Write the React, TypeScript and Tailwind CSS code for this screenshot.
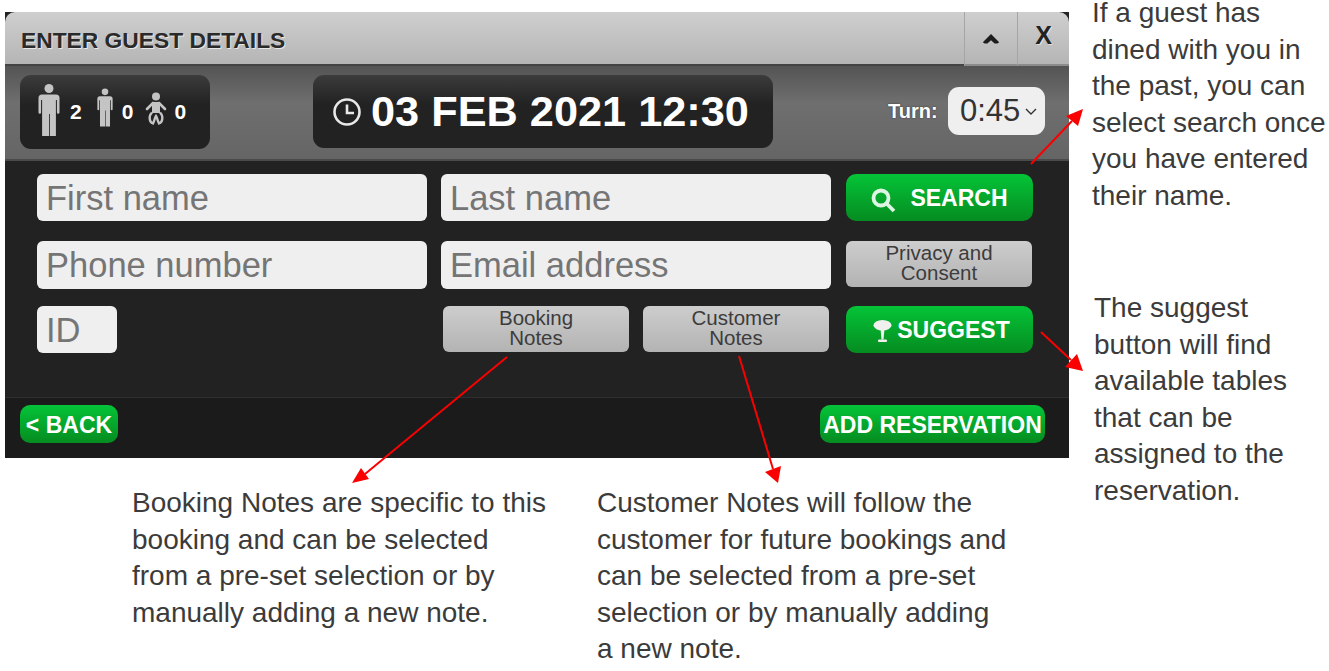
import React from "react";

const sans = "font-['Liberation_Sans',Arial,sans-serif]";

const Person = ({ className }: { className: string }) => (
  <svg viewBox="0 0 22 52" className={className} fill="#c4c4c4">
    <circle cx="11" cy="4.500" r="4.500" />
    <path d="M4 10.500h14a3.500 3.500 0 0 1 3.500 3.500v14.500a1.300 1.300 0 0 1-2.600 0V16h-1v36h-6V30h-.8v22H4.100V16h-1v12.500a1.300 1.300 0 0 1-2.600 0V14A3.500 3.500 0 0 1 4 10.500z" />
  </svg>
);

const Baby = () => (
  <svg viewBox="0 0 22 33" className="w-[22px] h-[33px] ml-[12px] mb-[7px]" fill="none">
    <circle cx="11" cy="4.500" r="4" fill="#c4c4c4" />
    <path d="M7 10h8v11H7z" fill="#c4c4c4" />
    <path d="M8 11l-6 6M14 11l6 6" stroke="#c4c4c4" strokeWidth="2.600" strokeLinecap="round" />
    <path d="M7 20.500C3.500 24 4 30 8 31.500C9.500 29 9.500 26 11 24C12.500 26 12.500 29 14 31.500C18 30 18.500 24 15 20.500" stroke="#c4c4c4" strokeWidth="2.400" />
  </svg>
);

const Clock = () => (
  <svg viewBox="0 0 28 28" className="w-[28px] h-[28px] shrink-0" fill="none" stroke="#e8e8e8">
    <circle cx="14" cy="14" r="12.500" strokeWidth="2.600" />
    <path d="M14 6.500V15h7" strokeWidth="2.600" />
  </svg>
);

const SearchIcon = () => (
  <svg viewBox="0 0 25 25" className="w-[25px] h-[25px] shrink-0 mt-[4px]" fill="none" stroke="#dff5e4">
    <circle cx="10" cy="10" r="7.500" strokeWidth="3.800" />
    <path d="M15 15l8 8" strokeWidth="3.800" />
  </svg>
);

const TableIcon = () => (
  <svg viewBox="0 0 19 22" className="w-[19px] h-[22px] shrink-0" fill="#f0f0ee">
    <ellipse cx="9.500" cy="5.300" rx="9" ry="5.300" />
    <path d="M7.500 9h4l-1 10.500h-2z" />
    <rect x="5" y="19.500" width="9" height="2.500" rx="1" />
  </svg>
);

const Field = ({ placeholder, className }: { placeholder: string; className: string }) => (
  <input
    placeholder={placeholder}
    className={`${className} bg-[#efefef] rounded-[6px] pl-[9px] pt-[2px] text-[34.500px] text-[#333] placeholder:text-[#757575] outline-none`}
  />
);

const GreyButton = ({ lines, className }: { lines: string[]; className: string }) => (
  <button className={`${className} rounded-[6px] bg-gradient-to-b from-[#cdcdcd] to-[#b3b3b3] text-[#3c3c3c] text-[20.500px] leading-[20px] pb-[2px] flex flex-col items-center justify-center`}>
    {lines.map((l) => (
      <span key={l}>{l}</span>
    ))}
  </button>
);

const greenBtn =
  "bg-gradient-to-b from-[#04c438] to-[#058c20] text-white font-bold flex items-center justify-center text-[23px] pt-[2px]";

const Note = ({ lines, className }: { lines: string[]; className: string }) => (
  <div className={`${className} absolute text-[28px] leading-[36.500px] text-[#3b3b3b] whitespace-nowrap`}>
    {lines.map((l) => (
      <div key={l}>{l}</div>
    ))}
  </div>
);

const Arrows = () => (
  <svg className="absolute left-0 top-0 w-[1329px] h-[671px] pointer-events-none" viewBox="0 0 1329 671">
    <g stroke="#fa0000" strokeWidth="2" fill="#fa0000">
      <line x1="1031" y1="164" x2="1072" y2="121" />
      <polygon points="1083,109 1066,116 1078,126" stroke="none" />
      <line x1="1041" y1="332" x2="1071" y2="360" />
      <polygon points="1083,371 1065,367 1077,354" stroke="none" />
      <line x1="507" y1="357" x2="365" y2="474" />
      <polygon points="352,483 369,479 361,468" stroke="none" />
      <line x1="739" y1="356" x2="773" y2="469" />
      <polygon points="778,483 765,472 781,466" stroke="none" />
    </g>
  </svg>
);

const App = () => {
  return (
    <div className={`${sans} relative w-[1329px] h-[671px] bg-white overflow-hidden`}>
      <div className="pl-[5px] pt-[12px]">
        <div className="w-[1064px] h-[446px] bg-[#222] flex flex-col">
          {/* Title */}
          <div className="h-[54px] flex rounded-t-[10px] bg-gradient-to-b from-[#cfcfcf] to-[#b4b4b4]">
            <div className="flex-1 border-b-2 border-[#444] pl-[16px] pt-[15px] text-[22.800px] leading-[26px] font-bold text-[#2a2a2a] [text-shadow:1px_1px_0_#e8e8e8]">
              ENTER GUEST DETAILS
            </div>
            <div className="w-[53px] border-l border-[#a5a5a5] border-b-2 border-b-[#8c8c8c] flex items-center justify-center">
              <svg viewBox="0 0 18 11" className="w-[18px] h-[10px] mt-[2px]" fill="#1c1c1c">
                <path d="M9 0l9 9-2 1.500H13L9 7l-4 3.500H2L0 9z" />
              </svg>
            </div>
            <div className="w-[52px] border-l border-[#a5a5a5] border-b-2 border-b-[#8c8c8c] flex items-center justify-center text-[25px] font-bold text-[#222] pb-[5px] [text-shadow:1px_1px_0_#e0e0e0]">
              X
            </div>
          </div>

          {/* Toolbar */}
          <div className="h-[95px] border-b-2 border-[#4a4a4a] bg-gradient-to-b from-[#545454] via-[#6f6f6f] via-40% to-[#656565] flex items-start pl-[15px] pt-[9px]">
            <div className="w-[190px] h-[74px] rounded-[11px] bg-gradient-to-b from-[#3c3c3c] via-[#222] via-40% to-[#222] flex items-center pl-[18px] text-white font-bold text-[21px]">
              <Person className="w-[22px] h-[52px] mb-[4px]" />
              <span className="ml-[10px]">2</span>
              <Person className="w-[16px] h-[39px] ml-[15px] mb-[9px]" />
              <span className="ml-[9px]">0</span>
              <Baby />
              <span className="ml-[7px]">0</span>
            </div>
            <div className="ml-[103px] w-[460px] h-[73px] rounded-[11px] bg-gradient-to-b from-[#3c3c3c] via-[#222] via-40% to-[#222] flex items-center pl-[20px] gap-[10px] text-white font-bold text-[43.300px] whitespace-nowrap">
              <Clock />
              <span>03 FEB 2021 12:30</span>
            </div>
            <div className="ml-[115px] mt-[12px] flex items-center">
              <span className="text-white font-bold text-[20px] w-[60px] [text-shadow:0_0_2px_#333]">Turn:</span>
              <div className="w-[97px] h-[48px] rounded-[11px] bg-[#efefef] flex items-center pl-[12px] text-[31px] text-[#333]">
                <span>0:45</span>
                <svg viewBox="0 0 12 7" className="w-[12px] h-[7px] ml-[5px]" fill="none" stroke="#333" strokeWidth="1.400">
                  <path d="M1 1l5 5 5-5" />
                </svg>
              </div>
            </div>
          </div>

          {/* Form */}
          <div className="flex-1 pl-[32px] pt-[13px] flex flex-col">
            <div className="flex gap-[14px]">
              <Field placeholder="First name" className="w-[390px] h-[47px]" />
              <Field placeholder="Last name" className="w-[390px] h-[47px]" />
              <button className={`${greenBtn} w-[187px] h-[47px] rounded-[10px] gap-[14px] ml-px`}>
                <SearchIcon />
                SEARCH
              </button>
            </div>
            <div className="flex gap-[14px] mt-[20px]">
              <Field placeholder="Phone number" className="w-[390px] h-[48px]" />
              <Field placeholder="Email address" className="w-[390px] h-[48px]" />
              <GreyButton lines={["Privacy and", "Consent"]} className="w-[186px] h-[46px] ml-px" />
            </div>
            <div className="flex mt-[17px]">
              <Field placeholder="ID" className="w-[80px] h-[47px]" />
              <GreyButton lines={["Booking", "Notes"]} className="w-[186px] h-[46px] ml-[326px]" />
              <GreyButton lines={["Customer", "Notes"]} className="w-[186px] h-[46px] ml-[14px]" />
              <button className={`${greenBtn} w-[187px] h-[47px] rounded-[10px] gap-[5px] pl-[4px] ml-[17px]`}>
                <TableIcon />
                SUGGEST
              </button>
            </div>
          </div>

          {/* Footer */}
          <div className="h-[61px] border-t border-[#2f2f2f] bg-[#1b1b1b] flex justify-between items-start pl-[15px] pr-[24px] pt-[7px]">
            <button className={`${greenBtn} w-[98px] h-[38px] rounded-[10px] whitespace-nowrap`}>&lt; BACK</button>
            <button className={`${greenBtn} w-[225px] h-[38px] rounded-[10px] whitespace-nowrap`}>ADD RESERVATION</button>
          </div>
        </div>
      </div>

      <Note
        className="left-[1092px] top-[-5px]"
        lines={["If a guest has", "dined with you in", "the past, you can", "select search once", "you have entered", "their name."]}
      />
      <Note
        className="left-[1094px] top-[290px]"
        lines={["The suggest", "button will find", "available tables", "that can be", "assigned to the", "reservation."]}
      />
      <Note
        className="left-[132px] top-[485px]"
        lines={["Booking Notes are specific to this", "booking and can be selected", "from a pre-set selection or by", "manually adding a new note."]}
      />
      <Note
        className="left-[597px] top-[485px]"
        lines={["Customer Notes will follow the", "customer for future bookings and", "can be selected from a pre-set", "selection or by manually adding", "a new note."]}
      />
      <Arrows />
    </div>
  );
};

export default App;
